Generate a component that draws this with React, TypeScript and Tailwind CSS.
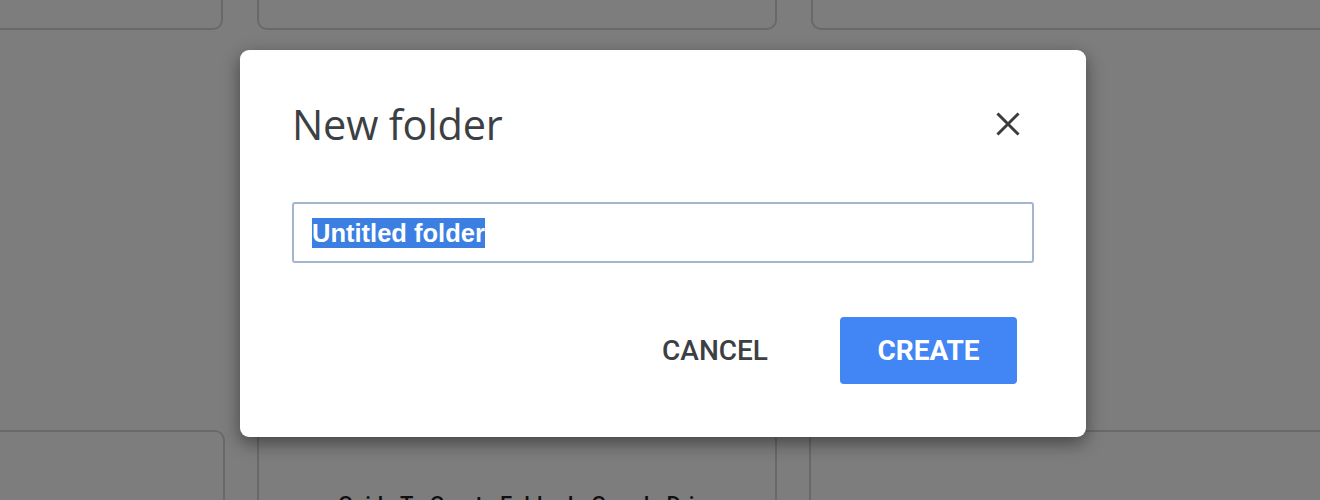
import { useState } from 'react';

const Card = ({ title }: { title?: string }) => (
  <div className="w-[520px] h-full shrink-0 rounded-[10px] border-2 border-[#d6d6d6] bg-white">
    {title && (
      <p className="pl-[79px] pt-[56px] text-[22px] text-[#1f1f1f] font-['Roboto',sans-serif] font-medium whitespace-nowrap">
        {title}
      </p>
    )}
  </div>
);

const App = () => {
  const [name] = useState('Untitled folder');

  return (
    <div className="relative w-[1320px] h-[500px] overflow-hidden bg-white">
      {/* drive grid behind the dialog */}
      <div className="flex flex-col h-full">
        <div className="flex gap-[34px] ml-[-297px] mt-[-40px] h-[70px]">
          <Card />
          <Card />
          <Card />
        </div>
        <div className="flex-1" />
        <div className="flex gap-[32px] ml-[-295px] h-[100px] mb-[-30px]">
          <Card />
          <Card title="Guide To Create Folder In Google Drive" />
          <Card />
        </div>
      </div>

      {/* scrim */}
      <div className="absolute inset-0 bg-black/[0.51]" />

      {/* dialog */}
      <div className="absolute left-[240px] top-[50px] w-[846px] h-[387px] rounded-[9px] bg-white shadow-[0_6px_18px_rgba(0,0,0,0.45)] font-['Roboto',sans-serif]">
        <div className="flex items-center justify-between pl-[52px] pr-[66px] pt-[49px]">
          <h2 className="text-[41.5px] leading-[50px] text-[#3c4043] font-['Open_Sans',sans-serif] font-normal tracking-[-0.2px]">New folder</h2>
          <svg width="24" height="24" viewBox="0 0 24 24" className="text-[#3c3c3c]">
            <path d="M2.5 2.5 L21.5 21.5 M21.5 2.5 L2.5 21.5" stroke="currentColor" strokeWidth="3" strokeLinecap="square" />
          </svg>
        </div>

        <div className="mx-[52px] mt-[53px] h-[61px] rounded-[3px] border-2 border-[#a3b6cc] flex items-center pl-[18px]">
          <span className="bg-[#3b7fe3] text-white text-[25.5px] leading-[30px] font-bold font-['Liberation_Sans',sans-serif]">
            {name}
          </span>
        </div>

        <div className="flex justify-end items-center gap-[42px] pr-[69px] mt-[54px]">
          <button className="h-[67px] px-[30px] text-[28px] font-medium text-[#3c4043]">
            CANCEL
          </button>
          <button className="h-[67px] w-[177px] rounded-[4px] bg-[#4285f4] text-[28px] font-bold text-white">
            CREATE
          </button>
        </div>
      </div>
    </div>
  );
};

export default App;
